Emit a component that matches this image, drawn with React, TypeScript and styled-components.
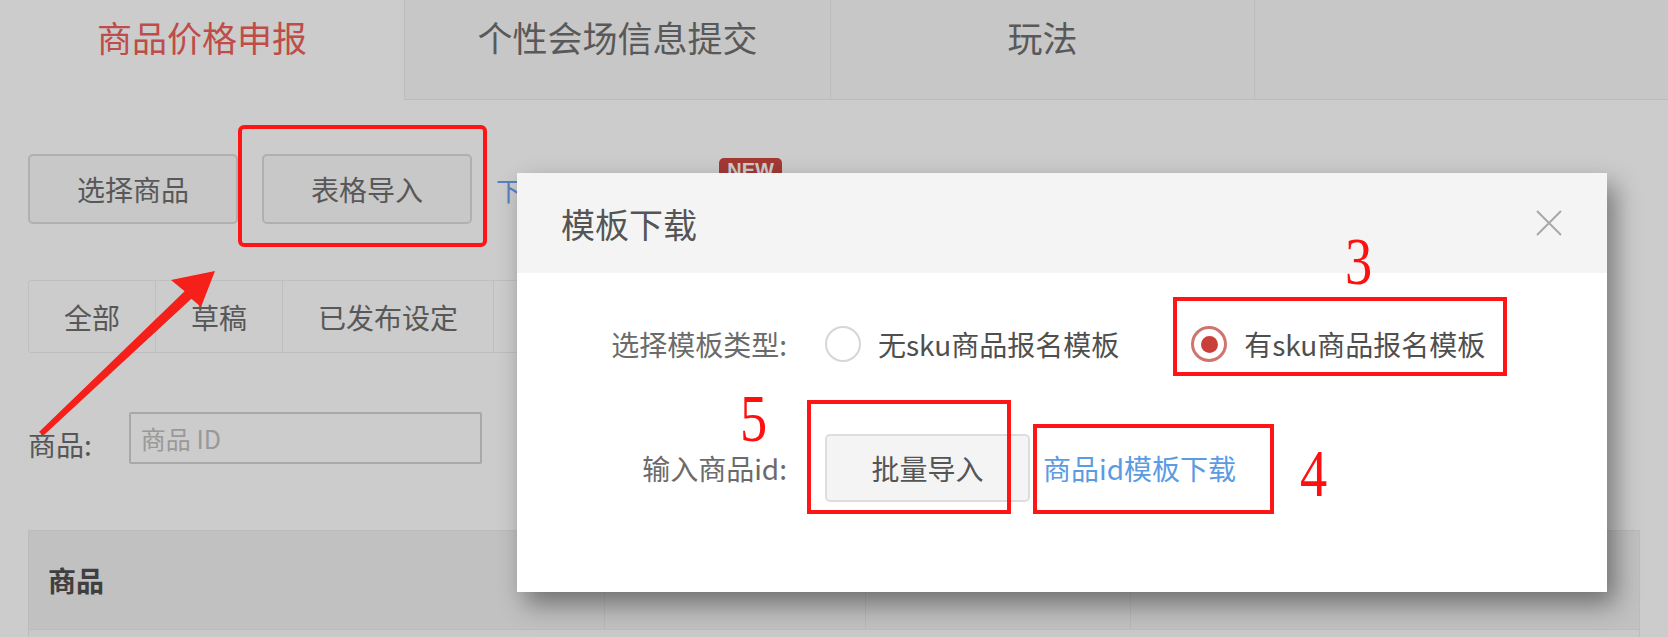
import React from 'react';
import styled, { createGlobalStyle } from 'styled-components';

const GlobalStyle = createGlobalStyle`
  html, body { margin: 0; padding: 0; background: #cccccc; }
  * { box-sizing: border-box; }
`;

const Page = styled.div`
  position: relative;
  width: 1668px;
  height: 637px;
  overflow: hidden;
  background: #ffffff;
  font-family: "Noto Sans CJK SC", "Noto Sans", sans-serif;
  color: #6a6a6a;
`;

const TabBar = styled.div`
  display: flex;
  height: 100px;
`;

const Tab = styled.div<{ $active?: boolean; $width?: number }>`
  flex: ${p => (p.$width ? `0 0 ${p.$width}px` : '1 1 auto')};
  display: flex;
  justify-content: center;
  padding-top: 14px;
  font-size: 35px;
  line-height: 46px;
  color: ${p => (p.$active ? '#ee5f5c' : '#707070')};
  background: ${p => (p.$active ? 'transparent' : '#f9f9f9')};
  border-left: ${p => (p.$active ? 'none' : '1px solid #ebebeb')};
  border-bottom: ${p => (p.$active ? 'none' : '1px solid #ebebeb')};
`;

const Toolbar = styled.div`
  display: flex;
  align-items: center;
  gap: 24px;
  margin-top: 54px;
  padding-left: 28px;
`;

const Button = styled.button`
  height: 70px;
  padding: 0 47px;
  font-family: inherit;
  font-size: 28px;
  color: #6e6e6e;
  background: #fbfbfb;
  border: 2px solid #dcdcdc;
  border-radius: 5px;
`;

const DownloadLink = styled.span`
  position: relative;
  font-size: 26px;
  color: #6f9ff0;
  padding-right: 130px;
`;

const NewBadge = styled.span`
  position: absolute;
  right: 0;
  top: -13px;
  width: 63px;
  height: 24px;
  border-radius: 5px;
  background: #cc4840;
  color: #fff;
  font-family: "Liberation Sans", sans-serif;
  font-weight: bold;
  font-size: 20px;
  line-height: 24px;
  text-align: center;
`;

const FilterGroup = styled.div`
  display: flex;
  margin: 56px 0 0 28px;
  height: 73px;
  border: 1px solid #efefef;
  border-radius: 3px;
  width: fit-content;
`;

const FilterItem = styled.div`
  display: flex;
  align-items: center;
  padding: 0 35px;
  font-size: 28px;
  color: #6e6e6e;
  & + & { border-left: 1px solid #efefef; }
`;

const SearchRow = styled.div`
  display: flex;
  align-items: center;
  gap: 37px;
  margin: 59px 0 0 28px;
`;

const SearchLabel = styled.span`
  font-size: 28px;
  color: #6c6c6c;
  margin-top: 12px;
`;

const SearchInput = styled.input`
  width: 353px;
  height: 52px;
  padding: 0 10px;
  font-family: inherit;
  font-size: 25px;
  border: 2px solid #d2d2d2;
  border-radius: 2px;
  background: #fff;
  &::placeholder { color: #c0c0c0; }
`;

const Table = styled.div`
  margin: 66px 28px 0 28px;
  border: 1px solid #ececec;
`;

const TableHead = styled.div`
  display: grid;
  grid-template-columns: 575px 261px 265px 1fr;
  height: 98px;
  background: #f2f2f2;
`;

const HeadCell = styled.div`
  display: flex;
  align-items: center;
  padding-left: 19px;
  font-size: 28px;
  font-weight: bold;
  color: #4f4f4f;
  & + & { border-left: 1px solid #e6e6e6; }
`;

const TableRow = styled.div`
  height: 60px;
  background: #fcfcfc;
  border-top: 1px solid #ececec;
`;

const Mask = styled.div`
  position: absolute;
  inset: 0;
  background: rgba(0, 0, 0, 0.2);
  z-index: 1;
`;

const Dialog = styled.div`
  position: absolute;
  left: 517px;
  top: 173px;
  width: 1090px;
  height: 419px;
  background: #ffffff;
  box-shadow: 8px 12px 24px rgba(0, 0, 0, 0.42);
  z-index: 2;
  display: flex;
  flex-direction: column;
`;

const DialogHeader = styled.div`
  height: 100px;
  display: flex;
  align-items: center;
  justify-content: space-between;
  padding: 0 44px;
  background: #f4f4f4;
  font-size: 34px;
  color: #555555;
`;

const CloseIcon = styled.svg`
  width: 28px;
  height: 28px;
  stroke: #a8a8a8;
  stroke-width: 2;
`;

const DialogBody = styled.div`
  display: flex;
  flex-direction: column;
  gap: 56px;
  padding-top: 37px;
`;

const FormRow = styled.div`
  display: flex;
  align-items: center;
  height: 68px;
`;

const FormLabel = styled.div`
  width: 270px;
  margin-right: 38px;
  text-align: right;
  font-size: 28px;
  color: #6b6b6b;
`;

const RadioOption = styled.label`
  display: flex;
  align-items: center;
  gap: 17px;
  font-size: 28px;
  color: #4f4f4f;
  & + & { margin-left: 72px; }
`;

const RadioDot = styled.span<{ $checked?: boolean }>`
  width: 36px;
  height: 36px;
  border-radius: 50%;
  border: ${p => (p.$checked ? '3px solid #d07470' : '2px solid #d6d6d6')};
  display: flex;
  align-items: center;
  justify-content: center;
  &::after {
    content: '';
    width: 17px;
    height: 17px;
    border-radius: 50%;
    background: ${p => (p.$checked ? '#c9403a' : 'transparent')};
  }
`;

const GhostButton = styled.button`
  width: 205px;
  height: 68px;
  font-family: inherit;
  font-size: 28px;
  color: #555555;
  background: #f4f4f4;
  border: 2px solid #dddddd;
  border-radius: 5px;
`;

const TextLink = styled.a`
  margin-left: 13px;
  font-size: 28px;
  color: #5b9be3;
  text-decoration: none;
`;

const Mark = styled.div<{ $x: number; $y: number; $w: number; $h: number; $r?: number }>`
  position: absolute;
  left: ${p => p.$x}px;
  top: ${p => p.$y}px;
  width: ${p => p.$w}px;
  height: ${p => p.$h}px;
  border: 4px solid #ff1515;
  border-radius: ${p => p.$r ?? 0}px;
  z-index: 3;
  pointer-events: none;
`;

const MarkNumber = styled.div<{ $x: number; $y: number }>`
  position: absolute;
  left: ${p => p.$x}px;
  top: ${p => p.$y}px;
  font-family: "Liberation Serif", serif;
  font-size: 68px;
  line-height: 1;
  color: #ff1010;
  transform: scaleX(0.8);
  transform-origin: left top;
  z-index: 3;
`;

const ArrowLayer = styled.svg`
  position: absolute;
  inset: 0;
  width: 1668px;
  height: 637px;
  z-index: 3;
  pointer-events: none;
`;

export default function App() {
  return (
    <>
      <GlobalStyle />
      <Page>
        <TabBar>
          <Tab $active $width={404}>商品价格申报</Tab>
          <Tab $width={426}>个性会场信息提交</Tab>
          <Tab $width={424}>玩法</Tab>
          <Tab />
        </TabBar>

        <Toolbar>
          <Button>选择商品</Button>
          <Button>表格导入</Button>
          <DownloadLink>
            下载表格模板
            <NewBadge>NEW</NewBadge>
          </DownloadLink>
        </Toolbar>

        <FilterGroup>
          <FilterItem>全部</FilterItem>
          <FilterItem>草稿</FilterItem>
          <FilterItem>已发布设定</FilterItem>
          <FilterItem>已结束</FilterItem>
        </FilterGroup>

        <SearchRow>
          <SearchLabel>商品:</SearchLabel>
          <SearchInput placeholder="商品 ID" />
        </SearchRow>

        <Table>
          <TableHead>
            <HeadCell>商品</HeadCell>
            <HeadCell />
            <HeadCell />
            <HeadCell />
          </TableHead>
          <TableRow />
        </Table>

        <Mask />

        <Dialog>
          <DialogHeader>
            模板下载
            <CloseIcon viewBox="0 0 28 28" fill="none">
              <path d="M2 2 L26 26 M26 2 L2 26" />
            </CloseIcon>
          </DialogHeader>
          <DialogBody>
            <FormRow>
              <FormLabel>选择模板类型:</FormLabel>
              <RadioOption>
                <RadioDot />
                无sku商品报名模板
              </RadioOption>
              <RadioOption>
                <RadioDot $checked />
                有sku商品报名模板
              </RadioOption>
            </FormRow>
            <FormRow>
              <FormLabel>输入商品id:</FormLabel>
              <GhostButton>批量导入</GhostButton>
              <TextLink>商品id模板下载</TextLink>
            </FormRow>
          </DialogBody>
        </Dialog>

        <Mark $x={238} $y={125} $w={249} $h={122} $r={6} />
        <Mark $x={1173} $y={297} $w={334} $h={79} />
        <Mark $x={807} $y={400} $w={204} $h={114} />
        <Mark $x={1033} $y={424} $w={241} $h={90} />
        <MarkNumber $x={1345} $y={227}>3</MarkNumber>
        <MarkNumber $x={740} $y={384}>5</MarkNumber>
        <MarkNumber $x={1300} $y={439}>4</MarkNumber>

        <ArrowLayer viewBox="0 0 1668 637">
          <polygon
            points="39,432 184.6,291.3 171,280 215,271 201,307 191.4,298.7 44,435"
            fill="#f5201a"
          />
        </ArrowLayer>
      </Page>
    </>
  );
}
